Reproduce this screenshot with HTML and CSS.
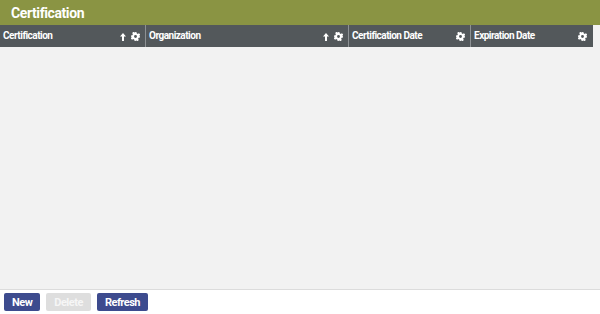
FILE: index.html
```html
<!DOCTYPE html>
<html lang="en">
<head>
  <meta charset="UTF-8" />
  <title>Certification</title>
  <link rel="stylesheet" href="styles.css">
</head>
<body>
  <div class="panel">
    <div class="title">Certification</div>
    <div class="grid-wrap">
      <div class="grid-head">
        <div class="col">
          <span class="label">Certification</span>
          <span class="icons">
            <svg class="arrow" width="6" height="8" viewBox="0 0 6 8"><path d="M3 0 L6 3.5 H4 V8 H2 V3.5 H0 Z" fill="#fff"/></svg>
            <svg class="gear" width="9" height="9" viewBox="0 0 10 10"><path fill="#fff" fill-rule="evenodd" d="M4 0h2l.3 1.5 1.2.6 1.3-.8 1.4 1.4-.8 1.3.6 1.2L10 4v2l-1.5.3-.6 1.2.8 1.3-1.4 1.4-1.3-.8-1.2.6L6 10H4l-.3-1.5-1.2-.6-1.3.8-1.4-1.4.8-1.3-.6-1.2L0 6V4l1.5-.3.6-1.2-.8-1.3 1.4-1.4 1.3.8 1.2-.6zM5 3.4a1.6 1.6 0 1 0 0 3.2 1.6 1.6 0 0 0 0-3.2z"/></svg>
          </span>
        </div>
        <div class="col">
          <span class="label">Organization</span>
          <span class="icons">
            <svg class="arrow" width="6" height="8" viewBox="0 0 6 8"><path d="M3 0 L6 3.5 H4 V8 H2 V3.5 H0 Z" fill="#fff"/></svg>
            <svg class="gear" width="9" height="9" viewBox="0 0 10 10"><path fill="#fff" fill-rule="evenodd" d="M4 0h2l.3 1.5 1.2.6 1.3-.8 1.4 1.4-.8 1.3.6 1.2L10 4v2l-1.5.3-.6 1.2.8 1.3-1.4 1.4-1.3-.8-1.2.6L6 10H4l-.3-1.5-1.2-.6-1.3.8-1.4-1.4.8-1.3-.6-1.2L0 6V4l1.5-.3.6-1.2-.8-1.3 1.4-1.4 1.3.8 1.2-.6zM5 3.4a1.6 1.6 0 1 0 0 3.2 1.6 1.6 0 0 0 0-3.2z"/></svg>
          </span>
        </div>
        <div class="col">
          <span class="label">Certification Date</span>
          <span class="icons">
            <svg class="gear" width="9" height="9" viewBox="0 0 10 10"><path fill="#fff" fill-rule="evenodd" d="M4 0h2l.3 1.5 1.2.6 1.3-.8 1.4 1.4-.8 1.3.6 1.2L10 4v2l-1.5.3-.6 1.2.8 1.3-1.4 1.4-1.3-.8-1.2.6L6 10H4l-.3-1.5-1.2-.6-1.3.8-1.4-1.4.8-1.3-.6-1.2L0 6V4l1.5-.3.6-1.2-.8-1.3 1.4-1.4 1.3.8 1.2-.6zM5 3.4a1.6 1.6 0 1 0 0 3.2 1.6 1.6 0 0 0 0-3.2z"/></svg>
          </span>
        </div>
        <div class="col">
          <span class="label">Expiration Date</span>
          <span class="icons">
            <svg class="gear" width="9" height="9" viewBox="0 0 10 10"><path fill="#fff" fill-rule="evenodd" d="M4 0h2l.3 1.5 1.2.6 1.3-.8 1.4 1.4-.8 1.3.6 1.2L10 4v2l-1.5.3-.6 1.2.8 1.3-1.4 1.4-1.3-.8-1.2.6L6 10H4l-.3-1.5-1.2-.6-1.3.8-1.4-1.4.8-1.3-.6-1.2L0 6V4l1.5-.3.6-1.2-.8-1.3 1.4-1.4 1.3.8 1.2-.6zM5 3.4a1.6 1.6 0 1 0 0 3.2 1.6 1.6 0 0 0 0-3.2z"/></svg>
          </span>
        </div>
      </div>
      <div class="grid-body"></div>
    </div>
    <div class="toolbar">
      <button class="btn">New</button>
      <button class="btn" disabled>Delete</button>
      <button class="btn">Refresh</button>
    </div>
  </div>
</body>
</html>
```

FILE: styles.css
```css
body {
  margin: 0;
  font-family: Roboto, "Liberation Sans", sans-serif;
  background-color: #fff;
}

.panel {
  width: 600px;
  height: 314px;
  display: flex;
  flex-direction: column;
}

.title {
  height: 25px;
  background-color: #8a9443;
  color: #fff;
  font-size: 14px;
  font-weight: bold;
  letter-spacing: -0.4px;
  padding-left: 11px;
  line-height: 26px;
  box-sizing: border-box;
}

.grid-wrap {
  flex: 1;
  background-color: #f2f2f2;
  border-bottom: 1px solid #dcdcdc;
  display: flex;
  flex-direction: column;
}

.grid-head {
  display: grid;
  grid-template-columns: 146px 203px 122px 122px;
  height: 22px;
  width: 593px;
  background-color: #53585b;
}

.col {
  display: flex;
  align-items: center;
  justify-content: space-between;
  padding: 0 5px 0 3px;
  border-right: 1px solid #8d9194;
  color: #fff;
  font-size: 10px;
  font-weight: bold;
  letter-spacing: -0.5px;
}

.col:last-child {
  border-right: none;
  padding-right: 6px;
}

.label {
  margin-top: -2px;
}

.icons {
  display: flex;
  align-items: center;
  gap: 5px;
  margin-top: 1px;
}

.grid-body {
  flex: 1;
}

.toolbar {
  height: 24px;
  display: flex;
  gap: 6px;
  padding: 3px 4px 0;
  box-sizing: border-box;
}

.btn {
  height: 18px;
  padding: 0 8px;
  background-color: #3d4b8e;
  color: #fff;
  font-family: Roboto, "Liberation Sans", sans-serif;
  font-size: 11px;
  font-weight: bold;
  letter-spacing: -0.5px;
  border: none;
  border-radius: 2px;
}

.btn:disabled {
  background-color: #dedede;
  color: #f6f6f6;
}
```
